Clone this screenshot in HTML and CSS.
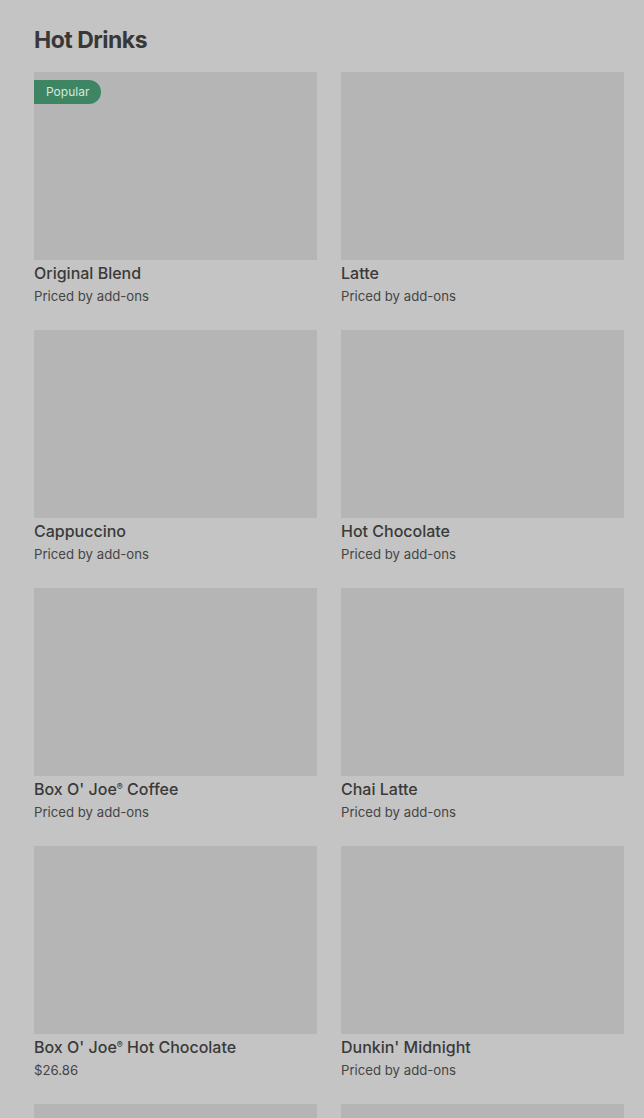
FILE: index.html
```html
<!DOCTYPE html>
<html lang="en">
<head>
    <meta charset="UTF-8">
    <meta name="viewport" content="width=device-width, initial-scale=1.0">
    <title>Hot Drinks</title>
    <link rel="stylesheet" href="styles.css">
</head>
<body>

<section class="menu-section">
    <h2>Hot Drinks</h2>

    <div class="grid">
        <div class="item">
            <div class="thumb"><span class="badge">Popular</span></div>
            <div class="name">Original Blend</div>
            <div class="price">Priced by add-ons</div>
        </div>
        <div class="item">
            <div class="thumb"></div>
            <div class="name">Latte</div>
            <div class="price">Priced by add-ons</div>
        </div>
        <div class="item">
            <div class="thumb"></div>
            <div class="name">Cappuccino</div>
            <div class="price">Priced by add-ons</div>
        </div>
        <div class="item">
            <div class="thumb"></div>
            <div class="name">Hot Chocolate</div>
            <div class="price">Priced by add-ons</div>
        </div>
        <div class="item">
            <div class="thumb"></div>
            <div class="name">Box O' Joe<span class="reg">®</span> Coffee</div>
            <div class="price">Priced by add-ons</div>
        </div>
        <div class="item">
            <div class="thumb"></div>
            <div class="name">Chai Latte</div>
            <div class="price">Priced by add-ons</div>
        </div>
        <div class="item">
            <div class="thumb"></div>
            <div class="name">Box O' Joe<span class="reg">®</span> Hot Chocolate</div>
            <div class="price">$26.86</div>
        </div>
        <div class="item">
            <div class="thumb"></div>
            <div class="name">Dunkin' Midnight</div>
            <div class="price">Priced by add-ons</div>
        </div>
        <!-- next row, only the top of the pictures shows -->
        <div class="item">
            <div class="thumb"></div>
        </div>
        <div class="item">
            <div class="thumb"></div>
        </div>
    </div>
</section>

</body>
</html>
```

FILE: styles.css
```css
body {
    font-family: Inter, 'Liberation Sans', sans-serif;
    background: #c4c4c4;
    color: #3a3a3a;
    margin: 0;
    height: 1118px;
    overflow: hidden;
}

.menu-section {
    padding: 26px 20px 0 34px;
}

h2 {
    font-size: 23px;
    font-weight: 700;
    letter-spacing: -0.5px;
    line-height: 28px;
    margin: 0 0 18px 0;
    color: #383838;
}

.grid {
    display: grid;
    grid-template-columns: 283px 283px;
    column-gap: 24px;
    row-gap: 24px;
}

.thumb {
    position: relative;
    height: 188px;
    background-color: #b5b5b5;
}

.badge {
    position: absolute;
    top: 8px;
    left: 0;
    height: 24px;
    line-height: 24px;
    padding: 0 12px;
    font-size: 12px;
    color: #d4e8dc;
    background-color: #3e8663;
    border-radius: 0 12px 12px 0;
}

.name {
    margin-top: 3px;
    font-size: 16px;
    font-weight: 500;
    line-height: 20px;
    color: #3a3a3a;
}

.reg {
    font-size: 9px;
    vertical-align: 5px;
    line-height: 0;
}

.price {
    margin-top: 3px;
    font-size: 13.2px;
    line-height: 20px;
    color: #454545;
}
```
